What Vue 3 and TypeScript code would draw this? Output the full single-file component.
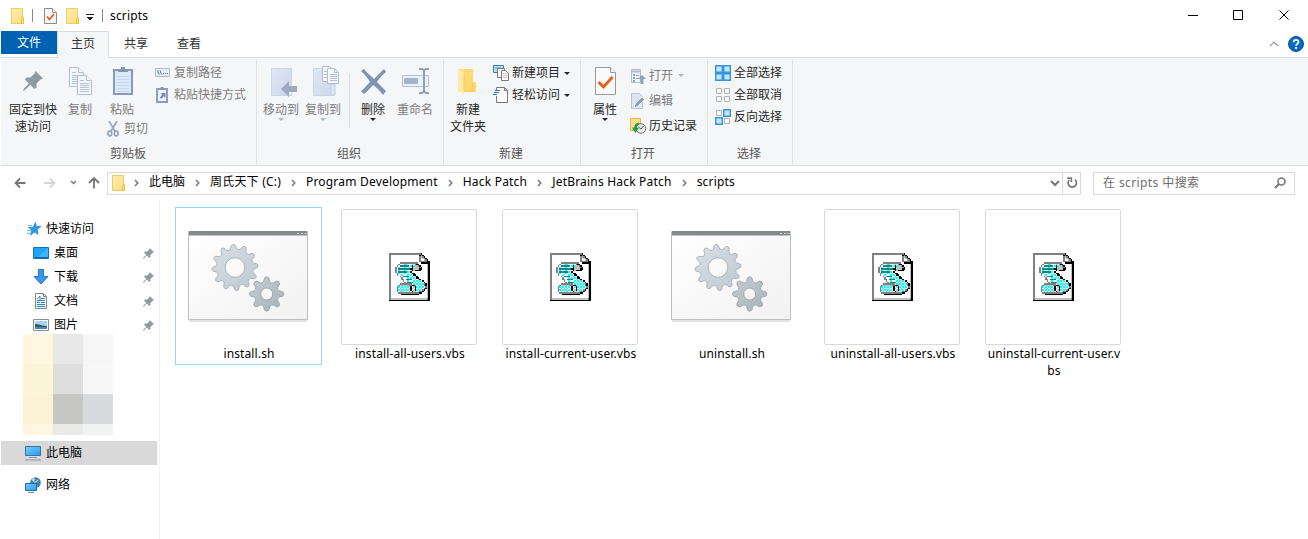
<script setup lang="ts">
interface FileEntry {
  name: string
  kind: 'shell' | 'vbs'
  selected?: boolean
}

const crumbs: string[] = ['此电脑', '周氏天下 (C:)', 'Program Development', 'Hack Patch', 'JetBrains Hack Patch', 'scripts']

const files: FileEntry[] = [
  { name: 'install.sh', kind: 'shell', selected: true },
  { name: 'install-all-users.vbs', kind: 'vbs' },
  { name: 'install-current-user.vbs', kind: 'vbs' },
  { name: 'uninstall.sh', kind: 'shell' },
  { name: 'uninstall-all-users.vbs', kind: 'vbs' },
  { name: 'uninstall-current-user.vbs', kind: 'vbs' },
]

const pinned: string[] = ['桌面', '下载', '文档', '图片']

const mosaic: string[] = [
  '#fff6e0', '#e8e8e8', '#f6f6f6',
  '#fcf4d8', '#dedede', '#f7f7f7',
  '#fcf3d6', '#c6c6c4', '#d9dadc',
  '#fff6e2', '#e9e9e7', '#f1f3f2',
]

/** Outline of a gear with rounded teeth, as an SVG path. */
function gear(cx: number, cy: number, teeth: number, outer: number, root: number, hole: number, phase: number): string {
  const step = (Math.PI * 2) / teeth
  const at = (r: number, a: number) => `${(cx + r * Math.cos(a)).toFixed(2)} ${(cy + r * Math.sin(a)).toFixed(2)}`
  let d = ''
  for (let i = 0; i < teeth; i++) {
    const a = i * step + phase
    d += `${i ? 'L' : 'M'}${at(root + 0.6, a - step * 0.31)}`
    d += `L${at(outer - 1.4, a - step * 0.17)}Q${at(outer + 0.9, a)} ${at(outer - 1.4, a + step * 0.17)}`
    d += `L${at(root + 0.6, a + step * 0.31)}Q${at(root - 0.9, a + step * 0.5)} ${at(root + 0.6, a + step * 0.69)}`
  }
  d += `ZM${cx - hole} ${cy}a${hole} ${hole} 0 1 0 ${hole * 2} 0a${hole} ${hole} 0 1 0 ${-hole * 2} 0Z`
  return d
}

const bigGear = gear(47, 36.5, 12, 23.6, 18.3, 9.8, -0.08)
const smallGear = gear(78.7, 63, 8, 17.6, 12.2, 6, 0)

/* Script scroll drawn pixel by pixel: c is dithered cyan, s a sparser dither, t a teal text line. */
const scroll: string[] = [
  'gggggggggggggggggggggk',
  'gwwwwwwwwwwwwwwwwwwwkgk',
  'gwwwwwwwwwwwwwwwwwwwglgk',
  'gwwwwwwwwwwwwwwwwwwwgwlgk',
  'gwwwwwwwwwwwwwwwwwwwgwwlgk',
  'gwwwwwwwwwwwwwwwwwwwgggggkk',
  'gwwwwwwggggggggggggwwkkkkkk',
  'gwwwwwgscsscsscccgkkwwwwwlk',
  'gwwwwgwttttttscksllgkwwwwlk',
  'gwwwgsssssssscckllllgkwwwlk',
  'gwwwgwttttttttkkllllkkwwwlk',
  'gwwwgssssssssscklkkkkwwwwlk',
  'gwwwgwttttttsckwwwwwwwwwwlk',
  'gwwwwgssssssccckkwwwwwwwwlk',
  'gwwwwgwssssscccckkwwwwwwwlk',
  'gwwwwwwgsttttscccckwwwwwwlk',
  'gwwwwwwwgssssccccckkwwwwwlk',
  'gwwwwwwwggwttttscccckwwwwlk',
  'gwwwwwwwwgwssssccccccckwwlk',
  'gwwwwwwwwwgwttttscccccckwlk',
  'gwwwwwwggggggggscccccccgklk',
  'gwwwwwgllllllggkkccccccgklk',
  'gwwwwgcccccccckwlkccccccglk',
  'gwwwwgccccccccklwkcccccgklk',
  'gwwwwgcccccccckwlkccccgkwlk',
  'gwwwwgcccccccccklcccggkwwlk',
  'gwwwwwggggggggggggggkkwwwlk',
  'gwwwwwwwkkkkkkkkkkkkwwwwwlk',
  'gwwwwwwwwwwwwwwwwwwwwwwwwlk',
  'gwwwwwwwwwwwwwwwwwwwwwwwwlk',
  'gllllllllllllllllllllllllgk',
  'kkkkkkkkkkkkkkkkkkkkkkkkkkk',
]
const inks: Record<string, string> = { g: '#808080', k: '#000', w: '#fff', l: '#c0c0c0', t: '#108888' }
function ink(ch: string, x: number, y: number): string {
  if (ch === 'c') return (x + y) % 2 ? '#fff' : '#00ffff'
  if (ch === 's') return (x + y * 2) % 4 ? '#fff' : '#00ffff'
  return inks[ch]
}
const pixels = scroll.flatMap((row, y) => [...row].map((ch, x) => ({ x, y, fill: ink(ch, x, y) })))
</script>

<template>
  <div class="window">
    <svg class="defs" width="0" height="0" aria-hidden="true">
      <defs>
        <linearGradient id="folderFill" x1="0" y1="0" x2="1" y2="1">
          <stop offset="0" stop-color="#ffeeb0" /><stop offset="1" stop-color="#ffdc7a" />
        </linearGradient>
        <linearGradient id="blueScreen" x1="0" y1="0" x2="1" y2="1">
          <stop offset="0" stop-color="#7dccff" /><stop offset="1" stop-color="#1e9df5" />
        </linearGradient>
        <linearGradient id="paneFill" x1="0" y1="0" x2="1" y2="1">
          <stop offset="0" stop-color="#fff" /><stop offset="1" stop-color="#f2f2f2" />
        </linearGradient>
        <linearGradient id="gearFill" x1="0" y1="0" x2="1" y2="1">
          <stop offset="0" stop-color="#dae0e5" /><stop offset="1" stop-color="#bcc8d0" />
        </linearGradient>
        <linearGradient id="gearDark" x1="0" y1="0" x2="1" y2="1">
          <stop offset="0" stop-color="#c5ced3" /><stop offset="1" stop-color="#a7b1b6" />
        </linearGradient>
        <linearGradient id="paleBlue" x1="0" y1="0" x2="1" y2="1">
          <stop offset="0" stop-color="#dfe7f4" /><stop offset="1" stop-color="#cbd7ea" />
        </linearGradient>
        <g id="folder">
          <path d="M.5.5h11v10h1v5H.5z" fill="url(#folderFill)" stroke="#f0cd62" />
          <path d="M10.500 15.500v-5l1-1h1v6z" fill="#ffe08a" stroke="#e9bf45" />
        </g>
        <g id="pin">
          <path d="M12.500 0 20 7.500l-2.500 1-4 4v4l-2 1.500-4.300-4.300L2 19 0 20l.8-2.200L5.800 12.500 2 8.500 3.500 6.500h4l4-4z" fill="#8f9aa1" />
        </g>
        <g id="paleDoc">
          <path d="M.5.5h9l5 5v14H.5z" fill="#f4f8fd" stroke="#b0bfd6" />
          <path d="M9.500.5v5h5" fill="#fff" stroke="#b0bfd6" />
          <path d="M3 5.500h4M3 8.500h9M3 10.500h9M3 12.500h9M3 14.500h9M3 16.500h9" stroke="#b2c3df" />
        </g>
      </defs>
    </svg>

    <header class="titlebar">
      <svg class="tb-folder" width="13" height="16"><use href="#folder" /></svg>
      <i class="tb-sep"></i>
      <svg class="tb-check" width="13" height="16">
        <path d="M.5.5h8l4 4v11H.5z" fill="#f7f7f7" stroke="#8b8b8b" /><path d="M8.500.5v4h4" fill="#fff" stroke="#8b8b8b" />
        <path d="m3 8.500 2.500 3L10 6" fill="none" stroke="#e8571d" stroke-width="1.700" />
      </svg>
      <svg class="tb-folder2" width="13" height="16"><use href="#folder" /></svg>
      <svg class="tb-menu" width="8" height="7"><path d="M0 0h8v1H0zM1 3h6v1H6v1H5v1H3V5H2V4H1z" fill="#222" /></svg>
      <i class="tb-sep second"></i>
      <span class="title">scripts</span>
      <svg class="win-controls" width="102" height="12">
        <path d="M0 5.500h10M45.500.5h9v9h-9z" fill="none" stroke="#000" />
        <path d="m91.500.5 9 9m0-9-9 9" fill="none" stroke="#000" />
      </svg>
    </header>

    <nav class="tabs">
      <span class="tab file">文件</span>
      <span class="tab active">主页</span>
      <span class="tab share">共享</span>
      <span class="tab view">查看</span>
      <svg class="collapse" width="10" height="6"><path d="m1 5 4-4 4 4" fill="none" stroke="#999" stroke-width="1.200" /></svg>
      <svg class="help" width="16" height="16">
        <circle cx="8" cy="8" r="7.500" fill="#0a69c7" stroke="#07539d" />
        <path d="M5.600 6.200C5.600 3 10.500 3.200 10.500 6c0 1.800-2.400 1.800-2.400 3.800" fill="none" stroke="#fff" stroke-width="1.700" /><path d="M7.100 11h2v2h-2z" fill="#fff" />
      </svg>
    </nav>

    <section class="ribbon">
      <div class="group g-clip">
        <div class="body">
          <div class="big w64">
            <svg width="32" height="34"><use href="#pin" x="6" y="5" /></svg>
            <span>固定到快<br />速访问</span>
          </div>
          <div class="big w30 off">
            <svg width="26" height="34">
              <use href="#paleDoc" x="2" y="1" /><use href="#paleDoc" x="10" y="9" />
            </svg>
            <span>复制</span>
          </div>
          <div class="big w54 off">
            <svg width="22" height="34">
              <path d="M3 4h18v24H3z" fill="#dce8f8" stroke="#8799bc" stroke-width="2" />
              <path d="M7 6V3h3V1h4v2h3v3z" fill="#8797b3" />
              <path d="M6 10.500h12M6 13.500h12M6 16.500h12M6 19.500h12M6 22.500h12M6 25.500h12" stroke="#c5d5ec" />
            </svg>
            <span>粘贴</span>
            <div class="cut">
              <svg width="12" height="16"><path d="M2 0 8.500 11M10 0 3.500 11" stroke="#9aa7bd" stroke-width="1.700" /><ellipse cx="2.800" cy="12.500" rx="1.900" ry="2.500" fill="none" stroke="#8fa3c7" stroke-width="1.600" /><ellipse cx="9.200" cy="12.500" rx="1.900" ry="2.500" fill="none" stroke="#8fa3c7" stroke-width="1.600" /></svg>
              <span>剪切</span>
            </div>
          </div>
          <div class="small-col clip-col off">
            <div class="row">
              <svg width="16" height="16"><path d="M.5 3.500h14v8H.5z" fill="#e3ecf8" stroke="#afbdd2" /><path d="m2.500 5.500 1.500 4m1-4 1.500 4" stroke="#5f7396" /><path d="M8 8.500h1m1 0h1m1 0h1" stroke="#5f7396" /></svg>
              <span>复制路径</span>
            </div>
            <div class="row">
              <svg width="16" height="16"><path d="M2 2h10v13H2z" fill="#edf3fb" stroke="#8b9fc3" stroke-width="2" /><path d="M4 3V1h1.500V0h3v1H10v2z" fill="#8797b3" /><path d="M5.500 6h5v5L8.800 9.200 6 12 4.800 10.700l2.400-2.900z" fill="#7488ae" /></svg>
              <span>粘贴快捷方式</span>
            </div>
          </div>
        </div>
        <footer>剪贴板</footer>
      </div>

      <div class="group g-org">
        <div class="body">
          <div class="big w48 off">
            <svg width="36" height="34">
              <path d="M8.500 2.500h20v27h-20z" fill="url(#paleBlue)" stroke="#cad7ea" /><path d="M25 24h4v5h-4z" fill="#eef3fa" stroke="#c1d0e6" />
              <path d="m18 23 8-8v5h8v6h-8v5z" fill="#9daac2" />
            </svg>
            <span>移动到</span><b class="arrow"></b>
          </div>
          <div class="big w36 off">
            <svg width="36" height="34">
              <path d="M8.500 2.500h20v27h-20z" fill="url(#paleBlue)" stroke="#cad7ea" /><path d="M26 18h4v11h-4z" fill="#dce5f2" stroke="#c1d0e6" />
              <path d="M17.500.5h7l3 3v12h-10z" fill="#f4f8fd" stroke="#afbed5" /><path d="M22.500 2.500h7l4 4v11h-11z" fill="#f6f9fe" stroke="#afbed5" />
              <path d="M29.500 2.500v4h4M19 5.500h3M19 8.500h3M19 11.500h3M25 8.500h7M25 10.500h7M25 12.500h7M25 14.500h7" fill="none" stroke="#b1c0d8" />
            </svg>
            <span>复制到</span><b class="arrow"></b>
          </div>
          <i class="inner-sep"></i>
          <div class="big w46">
            <svg width="32" height="34"><path d="m4 5 3-2c3 4 6 6 10 10 3-3 6-6 10-10l2 3c-4 3-7 7-9 10 4 4 6 6 9 9l-3 4c-3-4-7-8-10-10-3 3-6 7-9 9l-3-3c4-3 6-6 9-9-2-4-5-7-9-11z" fill="#8093b4" /></svg>
            <span>删除</span><b class="arrow"></b>
          </div>
          <div class="big w38 off">
            <svg width="32" height="34">
              <path d="M3.500 9.500h26v11h-26z" fill="#eaf2fc" stroke="#b0c2de" /><path d="M5 12h14v6H5z" fill="#a4b2cc" />
              <path d="M20 3h3l2 1.500L27 3h3M25 4.500v21M20 27h3l2-1.500 2 1.500h3" fill="none" stroke="#8d9fbd" stroke-width="2" />
            </svg>
            <span>重命名</span>
          </div>
        </div>
        <footer>组织</footer>
      </div>

      <div class="group g-new">
        <div class="body">
          <div class="big w48">
            <svg width="32" height="34">
              <path d="M6 3h15v13h3v10H6z" fill="#ffd873" /><path d="m6 3 6 3v22l-6-3z" fill="#ffeaaa" /><path d="M12 8v17h9V16" fill="none" stroke="#f4c756" />
            </svg>
            <span>新建<br />文件夹</span>
          </div>
          <div class="small-col new-col">
            <div class="row">
              <svg width="17" height="16">
                <path d="M.5.500h10v7H.5z" fill="#b9e0f7" stroke="#377c9e" /><path d="M2 3h6" stroke="#3a96c4" />
                <path d="M4.500 3.500h7v9h-7z" fill="#fff" stroke="#777" /><path d="M8.500 5.500h4l3 3v7h-7z" fill="#fff" stroke="#777" /><path d="M10 8.500h4m-4 2h4m-4 2h4" stroke="#efb5aa" />
              </svg>
              <span>新建项目</span><b class="arrow"></b>
            </div>
            <div class="row">
              <svg width="17" height="16"><path d="M3.500 3.500V.5h8l3 3v12h-11V9" fill="#fff" stroke="#777" /><path d="M11.500.5v3h3" fill="none" stroke="#777" /><path d="M2 3.500h5M1 5.500h5M0 7.500h4" stroke="#2476b7" /></svg>
              <span>轻松访问</span><b class="arrow"></b>
            </div>
          </div>
        </div>
        <footer>新建</footer>
      </div>

      <div class="group g-open">
        <div class="body">
          <div class="big w48">
            <svg width="32" height="34">
              <path d="M6.500 1.500h15l5 5v22h-20z" fill="#fafafa" stroke="#989898" /><path d="M21.500 1.500v5h5" fill="#fff" stroke="#989898" />
              <path d="m9.500 16 5 5 9-10" fill="none" stroke="#ee5a18" stroke-width="2.800" />
            </svg>
            <span>属性</span><b class="arrow"></b>
          </div>
          <div class="small-col open-col">
            <div class="row off">
              <svg width="17" height="16"><path d="M1.500 1.500h9v13h-9z" fill="#f2f6fc" stroke="#aebdd5" /><path d="M2 3.500h8" stroke="#aebdd5" stroke-width="2" /><path d="M3 6h2v2H3zm0 3h2v2H3zm0 3h2v2H3zm3-5h3v1H6zm0 3h3v1H6z" fill="#8da0c1" /><path d="m12 7 4 4h-2.500v5h-3v-5H8z" fill="#8da0c1" /></svg>
              <span>打开</span><b class="arrow"></b>
            </div>
            <div class="row off">
              <svg width="17" height="16"><path d="M1.500.5h8l3 3v12h-11z" fill="#dbe6f5" stroke="#b2c2dc" /><path d="m4 15 1-4 7-7 2.500 2.500-7 7z" fill="#8d9ebc" stroke="#eff4fb" /></svg>
              <span>编辑</span>
            </div>
            <div class="row">
              <svg width="17" height="16"><path d="M.5.500h10v12H.5z" fill="#ffe18b" stroke="#dfb84c" /><circle cx="11" cy="10.500" r="4.800" fill="#e9e9e9" stroke="#777" /><path d="M11 11 8.500 9M11 11l2.500-3" fill="none" stroke="#555" /><path d="M8.500 4.500C5 5.500 4.500 7.500 4.300 9.500H2L5.500 15 9 9.800H6.800C7 7.500 8 6.200 9.500 5.700z" fill="#1e9e3e" /></svg>
              <span>历史记录</span>
            </div>
          </div>
        </div>
        <footer>打开</footer>
      </div>

      <div class="group g-select">
        <div class="body">
          <div class="small-col select-col">
            <div class="row">
              <svg width="16" height="16"><path d="M.7.7h6.600v6.600H.7zm8 0h6.600v6.600H8.700zm-8 8h6.600v6.600H.7zm8 0h6.600v6.600H8.700z" fill="#c2e5fd" stroke="#3395e2" stroke-width="1.400" /></svg>
              <span>全部选择</span>
            </div>
            <div class="row">
              <svg width="16" height="16"><path d="M1.500 1.500h5v5h-5zm8 0h5v5h-5zm-8 8h5v5h-5zm8 0h5v5h-5z" fill="#fbfbfb" stroke="#b3b3b3" /></svg>
              <span>全部取消</span>
            </div>
            <div class="row">
              <svg width="16" height="16"><path d="M1.500 1.500h5v5h-5zm8 8h5v5h-5z" fill="#fbfbfb" stroke="#b3b3b3" /><path d="M8.700.7h6.600v6.600H8.700zm-8 8h6.600v6.600H.7z" fill="#c2e5fd" stroke="#3395e2" stroke-width="1.400" /></svg>
              <span>反向选择</span>
            </div>
          </div>
        </div>
        <footer>选择</footer>
      </div>
    </section>

    <div class="address-row">
      <svg class="history" width="90" height="14">
        <path d="M12.500 7H2M7 2.500 2.500 7 7 11.500" fill="none" stroke="#777" stroke-width="1.800" />
        <path d="M31 7h10.500M37 2.500l4.500 4.500-4.500 4.500" fill="none" stroke="#d5d5d5" stroke-width="1.800" />
        <path d="m58 5 2.500 2.500L63 5" fill="none" stroke="#777" stroke-width="1.500" />
        <path d="M81 12.500V2M76 7l5-5 5 5" fill="none" stroke="#777" stroke-width="1.800" />
      </svg>
      <div class="path-box">
        <svg class="path-folder" width="13" height="16"><use href="#folder" /></svg>
        <div v-for="crumb in crumbs" :key="crumb" class="crumb">
          <svg width="5" height="8"><path d="m1 1 2.800 3L1 7" fill="none" stroke="#777" stroke-width="1.500" /></svg>
          <span :class="{ latin: /[A-Za-z]/.test(crumb) }">{{ crumb }}</span>
        </div>
        <svg class="path-drop" width="10" height="7"><path d="m1 1 4 4 4-4" fill="none" stroke="#777" stroke-width="2" /></svg>
        <div class="refresh">
          <svg width="12" height="12"><path d="M8.900 2.600A4.200 4.200 0 1 1 3.200 3" fill="none" stroke="#777" stroke-width="1.700" /><path d="M1.200.3h5v5H4.600V1.900H1.200z" fill="#777" /></svg>
        </div>
      </div>
      <div class="search">
        <span>在 scripts 中搜索</span>
        <svg width="12" height="12"><circle cx="7.500" cy="4.500" r="3.500" fill="none" stroke="#777" stroke-width="1.600" /><path d="M5 7 1 11" stroke="#777" stroke-width="2" /></svg>
      </div>
    </div>

    <main class="content">
      <aside class="sidebar">
        <div class="side quick">
          <svg width="16" height="16"><path d="m9.500 1.500.8 4h4.700l-3.800 2.800.8 5L8.500 11 4.500 14l1.300-4.700-3.300-3h4.500z" fill="#2a9ae9" stroke="#1682d0" stroke-width=".7" /><path d="M2 4.500h4M1 9.500h4M1 12.500h3" stroke="#62b7ee" /></svg>
          <span>快速访问</span>
        </div>
        <div v-for="(item, i) in pinned" :key="item" class="side child">
          <svg v-if="i === 0" width="16" height="16"><path d="M.5 2.500h15v11H.5z" fill="#1da5fb" stroke="#0e72b5" /><path d="M2 12.500h13" stroke="#0b659f" /><path d="M15 3v9L5 12z" fill="#45b7ff" /></svg>
          <svg v-else-if="i === 1" width="16" height="16"><path d="M5.500.5h5v7h4.500L8 15 1 7.500h4.500z" fill="#3897ea" stroke="#2577bf" /></svg>
          <svg v-else-if="i === 2" width="16" height="16"><path d="M2.500.5h8l3 3v12h-11z" fill="#fff" stroke="#858585" /><path d="M10.500.5v3h3" fill="none" stroke="#858585" /><path d="m4 6 3-3v4M4 7.500h8M8 5.500h4M8 9.500h4M4 9.500h3M4 11.500h8M4 13.500h8" fill="none" stroke="#3185bd" /></svg>
          <svg v-else width="16" height="16"><path d="M.5 2.500h15v11H.5z" fill="#fff" stroke="#8b8b8b" /><path d="M2 4h12v8H2z" fill="#a8d5f5" /><path d="M2 7c4 0 7 2 12 2v1H2z" fill="#355c56" /><path d="M2 10h12v2H2z" fill="#3f88b8" /></svg>
          <span>{{ item }}</span>
          <svg class="side-pin" width="11" height="11" viewBox="0 0 20 20"><use href="#pin" /></svg>
        </div>
        <div class="mosaic"><i v-for="(color, i) in mosaic" :key="i" :style="{ background: color }"></i></div>
        <div class="side computer">
          <svg width="16" height="16"><path d="M.5 1.500h15v9H.5z" fill="url(#blueScreen)" stroke="#3d7095" /><path d="M4 12.500h8M0 15h16" stroke="#7d98af" /></svg>
          <span>此电脑</span>
        </div>
        <div class="side network">
          <svg width="16" height="17"><circle cx="10.500" cy="5.500" r="5.300" fill="#4085a8" /><path d="M6.500 2.500C9 0 11 1.500 9.500 3.500s2 1 4-1.500c-.5 3-2.500 4-5 3z" fill="#b9d7e4" /><path d="M.5 6.500h11v7H.5z" fill="url(#blueScreen)" stroke="#236e9f" /><path d="M3 15.500h6" stroke="#6c91aa" /></svg>
          <span>网络</span>
        </div>
      </aside>

      <div class="files">
        <div v-for="file in files" :key="file.name" class="file-cell" :class="{ selected: file.selected }">
          <div class="thumb" :class="file.kind">
            <svg v-if="file.kind === 'shell'" width="120" height="92">
              <path d="M1 90h118" stroke="#e3e3e3" stroke-width="2" />
              <path d="M.5.5h119v88H.5z" fill="url(#paneFill)" stroke="#bbbdbe" />
              <path d="M1 0h118v4.500H1z" fill="#84898c" /><path d="M109 2.500h2m2 0h2m1.500 0h2" stroke="#d0d3d4" />
              <path :d="bigGear" fill="url(#gearFill)" stroke="#adb6bc" fill-rule="evenodd" />
              <path :d="smallGear" fill="url(#gearDark)" stroke="#a0aaaf" fill-rule="evenodd" />
            </svg>
            <svg v-else width="41" height="48" viewBox="0 0 27 32" preserveAspectRatio="none" shape-rendering="crispEdges">
              <rect v-for="p in pixels" :key="p.x + '-' + p.y" :x="p.x" :y="p.y" width="1" height="1" :fill="p.fill" />
            </svg>
          </div>
          <div class="file-name">{{ file.name }}</div>
        </div>
      </div>
    </main>
  </div>
</template>

<style>
body { margin: 0; background: #fff; overflow: hidden; }
</style>

<style scoped>
.window { width: 1308px; height: 539px; background: #fff; color: #000; font: 12px/16px "Noto Sans", "Noto Sans CJK SC", sans-serif; overflow: hidden; }
.window * { box-sizing: border-box; }
svg { display: block; flex: none; }
.defs { position: absolute; }

.titlebar { height: 31px; display: flex; align-items: center; padding-left: 11px; }
.tb-sep { width: 1px; height: 13px; margin-left: 8px; background: #888; }
.tb-check { margin-left: 11px; }
.tb-folder2 { margin-left: 9px; }
.tb-menu { margin: 3px 0 0 7px; }
.title { margin-left: 7px; letter-spacing: .15px; }
.win-controls { margin-left: auto; margin-right: 18px; }

.tabs { height: 27px; display: flex; align-items: flex-start; padding-left: 1px; border-bottom: 1px solid #dadbdc; }
.tab { height: 24px; line-height: 26px; text-align: center; color: #333; }
.tab.file { width: 56px; height: 23px; line-height: 24px; background: #0063b1; color: #fff; }
.tab.active { width: 52px; height: 27px; border: 1px solid #dadbdc; border-bottom: 0; background: #f5f6f7; line-height: 24px; }
.tab.share { width: 54px; }
.tab.view { width: 52px; }
.collapse { margin: 10px 9px 0 auto; }
.help { margin: 5px 4px 0 0; }

.ribbon { height: 108px; margin-left: 1px; display: flex; background: #f5f6f7; border-bottom: 1px solid #dadbdc; color: #262626; }
.group { display: flex; flex-direction: column; height: 104px; margin-top: 2px; border-right: 1px solid #e0e1e3; }
.g-clip { width: 256px; }
.g-org { width: 187px; }
.g-new { width: 137px; }
.g-open { width: 127px; }
.g-select { width: 85px; }
.group .body { display: flex; height: 86px; }
.group footer { padding-right: 2px; text-align: center; color: #555; line-height: 16px; }
.g-clip footer { padding-right: 1px; }
.big { display: flex; flex-direction: column; align-items: center; padding-top: 6px; white-space: nowrap; text-align: center; line-height: 17px; }
.big > svg + span { display: block; margin-top: 1px; }
.off { color: #7d7d7d; }
.w64 { width: 64px; }
.w54 { width: 54px; }
.w48 { width: 48px; }
.w46 { width: 46px; }
.w38 { width: 38px; }
.w36 { width: 36px; }
.w30 { width: 30px; }
.arrow { display: block; width: 0; height: 0; border: 3px solid transparent; border-top-color: currentColor; border-bottom: 0; }
.off .arrow { border-top-color: #b5b5b5; }
.cut { display: flex; align-items: center; gap: 5px; margin: 2px 0 0 11px; }
.inner-sep { width: 1px; height: 55px; margin: 13px 0 0 8px; background: #dcdde0; }
.small-col { display: flex; flex-direction: column; padding-top: 2px; white-space: nowrap; }
.row { display: flex; align-items: center; height: 22px; }
.row svg { margin-right: 3px; }
.row .arrow { margin-left: 5px; }
.clip-col { margin-left: 6px; }
.new-col { margin-left: 1px; }
.new-col .row svg { margin-right: 2px; }
.new-col .arrow { margin-left: 4px; }
.open-col { margin-left: 1px; padding-top: 3px; }
.open-col .row { height: 25px; }
.open-col .row svg { margin-right: 2px; }
.select-col { margin-left: 7px; }

.address-row { height: 34px; display: flex; align-items: center; padding-left: 13px; }
.path-box { display: flex; align-items: center; width: 974px; height: 23px; margin-left: 4px; padding-left: 4px; border: 1px solid #d9d9d9; white-space: nowrap; }
.path-box span { margin-top: -2px; }
.path-folder { margin-right: -1px; }
.crumb { display: flex; align-items: center; padding-left: 10px; }
.crumb svg { margin-right: 10px; }
.crumb .latin { letter-spacing: .2px; }
.path-drop { margin-left: auto; margin-right: 2px; }
.refresh { width: 18px; height: 21px; display: flex; align-items: center; justify-content: center; border-left: 1px solid #d9d9d9; }
.search { display: flex; align-items: center; justify-content: space-between; width: 202px; height: 23px; margin-left: 12px; padding: 0 8px 0 9px; border: 1px solid #d9d9d9; color: #6d6d6d; letter-spacing: .4px; }

.content { height: 339px; display: flex; }
.sidebar { width: 160px; padding: 17px 0 0 1px; border-right: 1px solid #f3f3f3; }
.side { display: flex; align-items: center; height: 24px; white-space: nowrap; }
.quick { padding-left: 25px; }
.quick svg { margin-right: 4px; }
.child { padding-left: 32px; }
.child span { margin-left: 5px; }
.side-pin { margin-left: auto; margin-right: 5px; }
.mosaic { display: grid; grid-template: 30px 30px 30px 11px / 30px 30px 30px; width: 90px; margin: -3px 0 0 22px; }
.computer { width: 156px; margin-top: 6px; padding-left: 24px; background: #d9d9d9; }
.computer span, .network span { margin-left: 5px; }
.network { margin-top: 8px; padding-left: 24px; }

.files { display: grid; grid-template-columns: repeat(6, 147px); column-gap: 14px; padding: 7px 0 0 15px; align-items: start; }
.file-cell { display: flex; flex-direction: column; align-items: center; height: 158px; padding-top: 1px; border: 1px solid transparent; }
.file-cell.selected { border-color: #99d1ff; }
.thumb { display: flex; align-items: center; justify-content: center; width: 136px; height: 136px; margin-right: 1px; flex: none; }
.thumb.shell { padding-bottom: 1px; }
.thumb.vbs { border: 1px solid #d9d9d9; border-radius: 2px; }
.file-name { width: 138px; margin-left: 1px; line-height: 17px; text-align: center; word-break: break-all; letter-spacing: .12px; }
</style>
